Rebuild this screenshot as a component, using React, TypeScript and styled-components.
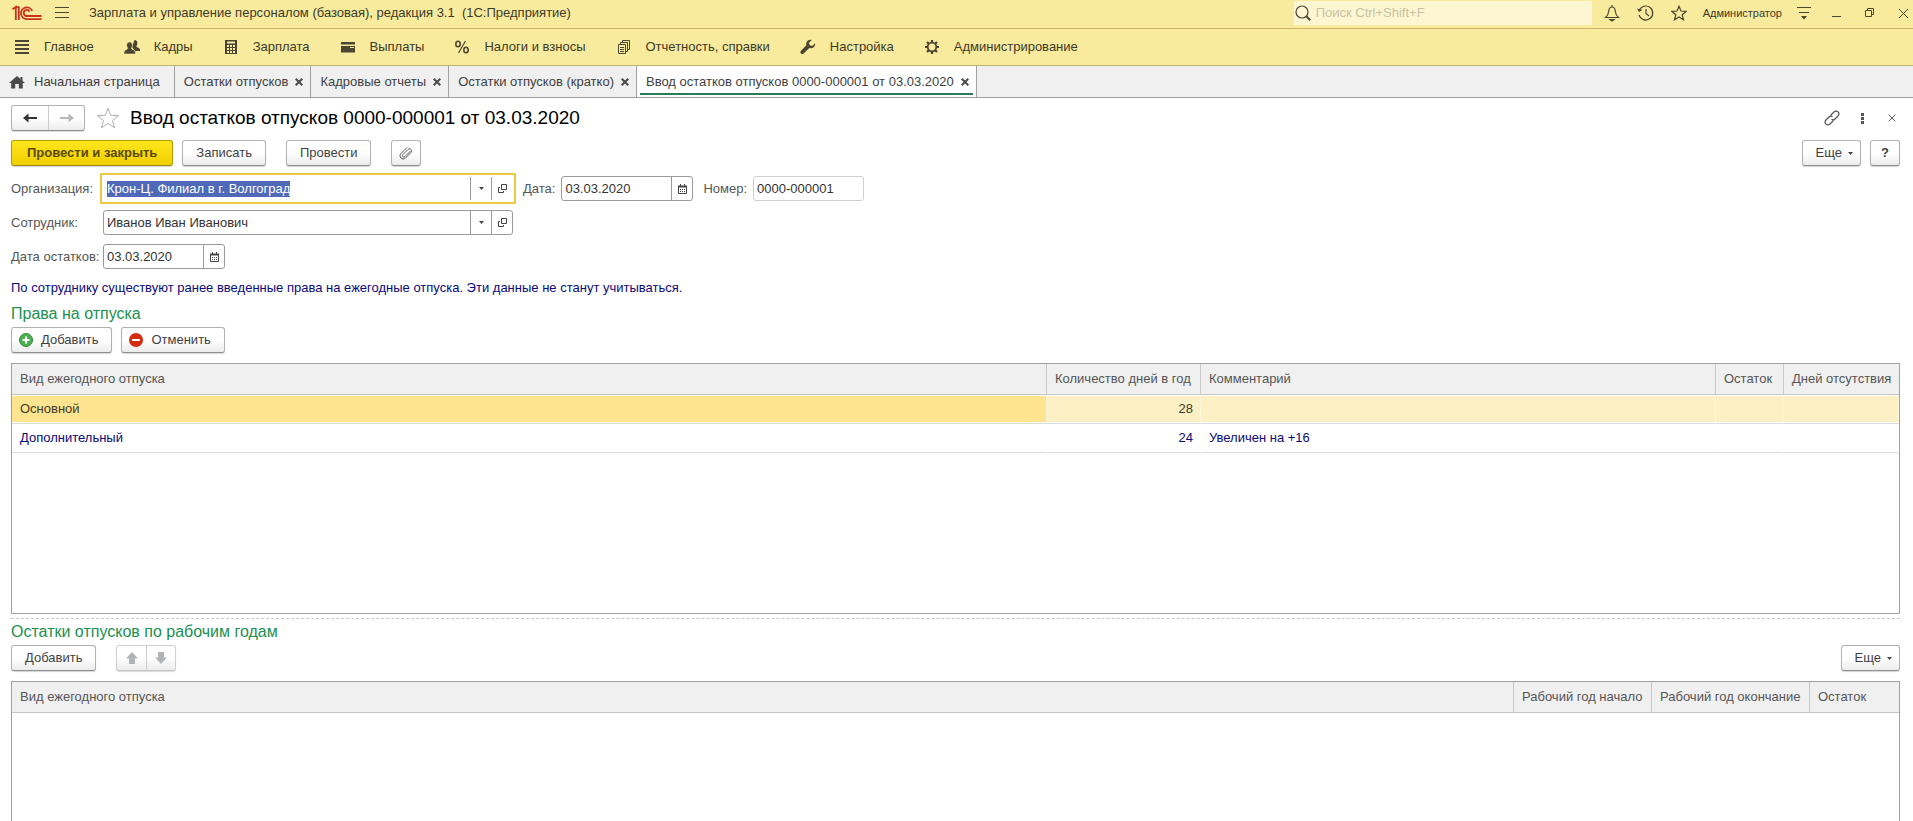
import React from "react";
import styled, { createGlobalStyle } from "styled-components";

const Global = createGlobalStyle`
  * { box-sizing: border-box; }
  body {
    margin: 0;
    background: #fff;
    color: #3f3f3f;
    font: 13px/16px "Liberation Sans", Arial, sans-serif;
  }
  button, input { font: inherit; color: inherit; }
`;

const Page = styled.div`
  display: flex;
  flex-direction: column;
  min-height: 100vh;
`;

const TitleBar = styled.header`
  display: flex;
  align-items: center;
  height: 29px;
  flex: none;
  padding: 0 0 2px 12px;
  background: #f8eb9e;
  border-bottom: 1px solid #c9b468;
  color: #3d3a28;
`;

const AppTitle = styled.div`
  margin-left: 7px;
  flex: 1;
  white-space: pre;
`;

const IconButton = styled.button<{ $w?: number }>`
  display: flex;
  align-items: center;
  justify-content: center;
  width: ${(p) => p.$w ?? 34}px;
  height: 24px;
  flex: none;
  padding: 0;
  border: 0;
  background: none;
`;

const Search = styled.label`
  display: flex;
  align-items: center;
  width: 298px;
  height: 24px;
  margin-right: 3px;
  background: #fdf6d3;
  input {
    flex: 1;
    min-width: 0;
    border: 0;
    padding: 0 4px;
    background: none;
    outline: 0;
  }
  input::placeholder { color: #c9c3a2; opacity: 1; }
`;

const UserLink = styled.a`
  margin: 0 12px 0 8px;
  font-size: 11px;
  color: #3d3a28;
  text-decoration: none;
`;

const Menu = styled.nav`
  display: flex;
  align-items: center;
  gap: 30px;
  height: 37px;
  flex: none;
  padding: 0 14px;
  background: #f8eb9e;
  border-bottom: 1px solid #bfb27a;
`;

const MenuItem = styled.a`
  display: flex;
  align-items: center;
  gap: 14px;
  color: #3d3a28;
  text-decoration: none;
  white-space: nowrap;
`;

const Tabs = styled.nav`
  display: flex;
  height: 32px;
  flex: none;
  background: #f0f0f0;
  border-bottom: 1px solid #a0a0a0;
`;

const Tab = styled.div<{ $active?: boolean }>`
  position: relative;
  display: flex;
  align-items: center;
  gap: 7px;
  padding: 0 7px 0 9px;
  border-right: 1px solid #a0a0a0;
  background: ${(p) => (p.$active ? "#fff" : "none")};
  white-space: nowrap;
  a { display: flex; gap: 9px; align-items: center; color: #3f3f3f; text-decoration: none; }
  &::after {
    content: "";
    display: ${(p) => (p.$active ? "block" : "none")};
    position: absolute;
    left: 3px;
    right: 3px;
    bottom: 2px;
    height: 2px;
    background: #2b7d58;
  }
`;

const HomeTab = styled(Tab)`
  padding-right: 14px;
`;

const Form = styled.main`
  display: flex;
  flex-direction: column;
  flex: 1;
  padding: 7px 13px 0 11px;
`;

const Row = styled.div<{ $gap?: number }>`
  display: flex;
  align-items: center;
  gap: ${(p) => p.$gap ?? 0}px;
  flex: none;
`;

const Heading = styled.h1`
  flex: 1;
  margin: 0;
  font-size: 19px;
  line-height: 24px;
  font-weight: 400;
  color: #000;
`;

const Button = styled.button<{ $pad?: number; $primary?: boolean }>`
  display: flex;
  align-items: center;
  justify-content: center;
  gap: 8px;
  height: 26px;
  padding: 0 ${(p) => p.$pad ?? 13}px;
  border: 1px solid ${(p) => (p.$primary ? "#b39b0c" : "#b2b2b2")};
  border-bottom-color: ${(p) => (p.$primary ? "#9c8608" : "#8f8f8f")};
  border-radius: 3px;
  background: ${(p) =>
    p.$primary
      ? "linear-gradient(#ffe61c, #f0cf00)"
      : "linear-gradient(#fff 50%, #ececec)"};
  box-shadow: 0 1px 1px #d5d5d5;
  color: ${(p) => (p.$primary ? "#5a4a00" : "#3f3f3f")};
  font-weight: ${(p) => (p.$primary ? 700 : 400)};
  white-space: nowrap;
`;

const PictureButton = styled(Button)`
  padding: 0 13px 0 7px;
`;

const MoreButton = styled(Button)`
  gap: 6px;
  padding: 0 7px 0 13px;
`;

const Pair = styled.div<{ $faded?: boolean }>`
  display: flex;
  height: 26px;
  border: 1px solid ${(p) => (p.$faded ? "#d0d0d0" : "#b2b2b2")};
  border-bottom-color: ${(p) => (p.$faded ? "#c4c4c4" : "#8f8f8f")};
  border-radius: 3px;
  background: linear-gradient(#fff 50%, #ececec);
  box-shadow: 0 1px 1px #dadada;
`;

const PairButton = styled.button<{ $w: number }>`
  display: flex;
  align-items: center;
  justify-content: center;
  width: ${(p) => p.$w}px;
  padding: 0;
  border: 0;
  background: none;
  & + & { border-left: 1px solid #ccc; }
`;

const Toolbar = styled(Row)`
  margin-top: 9px;
`;

const TableToolbar = styled(Row)`
  margin-top: 4px;
`;

const Spacer = styled.div`
  flex: 1;
`;

const Fields = styled.div`
  display: grid;
  grid-template-columns: 92px auto;
  row-gap: 9px;
  align-items: center;
  margin-top: 10px;
`;

const Label = styled.label`
  color: #555;
  white-space: nowrap;
`;

const InlineLabel = styled(Label)`
  margin-left: 4px;
`;

const Field = styled.div<{ $w: number; $focus?: boolean; $faded?: boolean }>`
  display: flex;
  width: ${(p) => p.$w}px;
  height: 25px;
  flex: none;
  border: 1px solid ${(p) => (p.$focus ? "#fff" : p.$faded ? "#d0d0d0" : "#9a9a9a")};
  border-radius: ${(p) => (p.$focus ? 0 : 3)}px;
  outline: ${(p) => (p.$focus ? "2px solid #ebca42" : "none")};
  outline-offset: 1px;
  background: #fff;
  color: #333;
  input {
    flex: 1;
    min-width: 0;
    padding: 0 0 0 3px;
    border: 0;
    background: none;
    outline: 0;
  }
  input::selection { background: #4f69b8; color: #fff; }
`;

const FieldButton = styled.button`
  display: flex;
  align-items: center;
  justify-content: center;
  width: 21px;
  padding: 0;
  border: 0;
  border-left: 1px solid #9a9a9a;
  background: none;
`;

const Notice = styled.p`
  margin: 11px 0 0;
  color: #0a0a78;
`;

const Section = styled.h2<{ $top: number }>`
  margin: ${(p) => p.$top}px 0 0;
  font-size: 16px;
  line-height: 18px;
  font-weight: 400;
  color: #209050;
`;

const GridBox = styled.div<{ $h?: number }>`
  margin-top: 10px;
  border: 1px solid #a0a0a0;
  background: #fff;
  ${(p) => (p.$h ? `height: ${p.$h}px; flex: none;` : "flex: 1; border-bottom: 0;")}
`;

const Table = styled.table`
  width: 100%;
  table-layout: fixed;
  border-collapse: separate;
  border-spacing: 0;
  th, td { padding: 0 7px 0 8px; text-align: left; font-weight: 400; white-space: nowrap; }
  th {
    height: 31px;
    background: #f0f0f0;
    color: #555;
    border-bottom: 1px solid #c4c4c4;
    border-right: 1px solid #c8c8c8;
  }
  th:last-child { border-right: 0; }
  td { height: 29px; border-bottom: 1px solid #dcdcdc; }
`;

const BodyRow = styled.tr<{ $selected?: boolean }>`
  color: ${(p) => (p.$selected ? "#3f3a28" : "#0a0a78")};
  td {
    background: ${(p) => (p.$selected ? "#fcf0c4" : "#fff")};
    border-right: 1px solid ${(p) => (p.$selected ? "#fdf7de" : "#fff")};
    box-shadow: ${(p) => (p.$selected ? "inset 0 1px #fff, inset 0 -1px #fff" : "none")};
  }
  td:first-child { background: ${(p) => (p.$selected ? "#fee48f" : "#fff")}; }
  td:nth-child(2) { text-align: right; }
`;

const Divider = styled.hr`
  width: 100%;
  margin: 4px 0 0;
  border: 0;
  border-top: 1px dashed #c8c8c8;
`;

const INK = "#4a4632";

const Logo = () => (
  <svg width="30" height="18" viewBox="0 0 30 18" fill="none" stroke="#c8321e" strokeWidth="1.8">
    <path d="M.5 5.200 3.800 3V16M4 3.200H6.800V16" />
    <path d="M20.300 7A5.900 5.900 0 1 0 14.700 15.200H29.500" />
    <path d="M17.500 7.800A3 3 0 1 0 14.700 12H29.500" />
  </svg>
);

const Cross = ({ s = 8, w = 2, c = "#4a4a4a" }: { s?: number; w?: number; c?: string }) => (
  <svg width={s} height={s} viewBox="0 0 8 8" stroke={c} strokeWidth={(w * 8) / s}>
    <path d="M.7.7 7.300 7.300M7.300.7.7 7.300" />
  </svg>
);

const Caret = () => (
  <svg width="5" height="3" viewBox="0 0 5 3" fill="#444"><path d="M0 0h5L2.500 3z" /></svg>
);

const OpenIcon = () => (
  <svg width="9" height="9" viewBox="0 0 9 9" fill="none" stroke="#444">
    <path d="M3.500.5h5v5h-5zM2 3.500H.5v5h5V7" />
  </svg>
);

const CalendarIcon = () => (
  <svg width="9" height="10" viewBox="0 0 9 10" fill="none" stroke="#444">
    <path d="M.5 2.500h8v7h-8zM2.500 0v2M6.500 0v2" />
    <path d="M0 2.500h9" strokeWidth="2" />
    <path d="M2 5.500h5M2 7.500h5" strokeDasharray="1 1" />
  </svg>
);

const Arrow = ({ left, c }: { left?: boolean; c: string }) => (
  <svg width="14" height="10" viewBox="0 0 14 10" fill={c}>
    {left ? <path d="M0 5 5.500.5V4H14v2H5.500v3.500z" /> : <path d="M14 5 8.500.5V4H0v2h8.500v3.500z" />}
  </svg>
);

const BlockArrow = ({ up }: { up?: boolean }) => (
  <svg width="12" height="12" viewBox="0 0 12 12" fill="#b0b4b6">
    {up ? <path d="M6 0 12 6.500H9V12H3V6.500H0z" /> : <path d="M6 12 0 5.500H3V0h6v5.500h3z" />}
  </svg>
);

const menuIcons: Record<string, React.ReactNode> = {
  list: <path d="M1 2h14M1 6h14M1 10h14M1 14h14" stroke={INK} strokeWidth="2" />,
  people: (
    <g fill={INK}>
      <path d="M10.500 1c2 0 3 1.400 2.800 3.500-.1 1.500-.8 2.300-1 3 .1.900 3.700 1.200 3.700 3.500v1h-5L8 8z" />
      <path d="M5.500 3c2 0 3.100 1.500 2.900 3.600-.1 1.500-.9 2.200-1 2.900.1 1 4.100 1.300 4.100 4V15H0v-1.500c0-2.700 3.600-3 3.700-4-.1-.7-.9-1.400-1-2.900C2.500 4.500 3.600 3 5.500 3z" stroke="#f8eb9e" strokeWidth=".6" />
    </g>
  ),
  calc: (
    <g>
      <path d="M2 1h12v14H2z" fill={INK} />
      <path d="M4 3.500h8M4 7h2M7 7h2M10 7h2M4 10h2M7 10h2M10 10h2M4 13h2M7 13h2M10 13h2" stroke="#f8eb9e" strokeWidth="2" />
    </g>
  ),
  card: (
    <g fill={INK}>
      <path d="M1 3h14v2.500H1zM1 7h14v6.500H1z" />
      <path d="M10 8.500h4" stroke="#f8eb9e" strokeWidth="1" />
    </g>
  ),
  percent: (
    <g fill="none" stroke={INK} strokeWidth="1.600">
      <ellipse cx="4" cy="5" rx="2.200" ry="2.800" />
      <ellipse cx="12" cy="11" rx="2.200" ry="2.800" />
      <path d="M11.500 2 4.500 14" strokeWidth="1.200" />
    </g>
  ),
  docs: (
    <g fill="none" stroke={INK}>
      <path d="M2.500 5.500h7v9h-7zM4.500 5V3.500h7v9H10M6.500 3V1.500h7v9H12M4 8.500h4M4 10.500h4M4 12.500h4" />
    </g>
  ),
  wrench: (
    <path d="M15 4.300 12.300 7 9.700 6.300 9 3.700 11.700 1C9.500.4 7 1.500 6.300 4c-.2.800-.1 1.500.1 2.300L1 11.800c-.8.800-.8 2 0 2.700s1.900.8 2.700 0L9.200 9c2.500.9 5.300-.5 5.900-3 .1-.6.100-1.200-.1-1.700z" fill={INK} />
  ),
  gear: (
    <g fill="none" stroke={INK}>
      <circle cx="8" cy="8" r="4.300" strokeWidth="1.800" />
      <path d="M8 1v2.500M8 12.500V15M1 8h2.500M12.500 8H15M3 3l1.900 1.900M11.100 11.100 13 13M3 13l1.900-1.900M11.100 4.900 13 3" strokeWidth="2.200" />
    </g>
  ),
};

const menu: [string, string][] = [
  ["list", "Главное"],
  ["people", "Кадры"],
  ["calc", "Зарплата"],
  ["card", "Выплаты"],
  ["percent", "Налоги и взносы"],
  ["docs", "Отчетность, справки"],
  ["wrench", "Настройка"],
  ["gear", "Администрирование"],
];

const tabs = [
  "Остатки отпусков",
  "Кадровые отчеты",
  "Остатки отпусков (кратко)",
  "Ввод остатков отпусков 0000-000001 от 03.03.2020",
];

const leaveTypes = [
  { name: "Основной", days: 28, comment: "" },
  { name: "Дополнительный", days: 24, comment: "Увеличен на +16" },
];

export default function App() {
  const orgRef = React.useRef<HTMLInputElement>(null);
  React.useEffect(() => {
    orgRef.current?.focus();
    orgRef.current?.select();
  }, []);

  return (
    <Page>
      <Global />
      <TitleBar>
        <Logo />
        <IconButton $w={40} aria-label="Меню">
          <svg width="14" height="12" viewBox="0 0 14 12" stroke={INK}><path d="M0 .5h14M0 5.500h14M0 10.500h14" /></svg>
        </IconButton>
        <AppTitle>{"Зарплата и управление персоналом (базовая), редакция 3.1  (1С:Предприятие)"}</AppTitle>
        <Search>
          <svg width="18" height="18" viewBox="0 0 18 18" fill="none" stroke={INK} strokeWidth="1.200">
            <circle cx="8" cy="8" r="6" /><path d="m12.300 12.300 4 4" strokeWidth="2" />
          </svg>
          <input aria-label="Поиск" placeholder="Поиск Ctrl+Shift+F" />
        </Search>
        <IconButton aria-label="Уведомления">
          <svg width="16" height="18" viewBox="0 0 16 18" fill="none" stroke={INK} strokeWidth="1.200">
            <path d="M1.500 13.500c2.500-2 3-4 3.300-6.500C5 4.500 6.300 3 8 3s3 1.500 3.200 4c.3 2.500.8 4.500 3.300 6.500zM8 1v2" />
            <path d="M6 15.500h4L8 17z" fill={INK} />
          </svg>
        </IconButton>
        <IconButton aria-label="История">
          <svg width="17" height="18" viewBox="0 0 17 18" fill="none" stroke={INK} strokeWidth="1.200">
            <path d="M2.200 6.500A7 7 0 1 1 2 11M9 5v4.500l3 2.500" /><path d="M0 4.500 2 8l3.500-2z" fill={INK} stroke="none" />
          </svg>
        </IconButton>
        <IconButton $w={32} aria-label="Избранное">
          <svg width="16" height="16" viewBox="0 0 16 16" fill="none" stroke={INK} strokeWidth="1.200">
            <path d="m8 1.200 2 4.800 5.200.3-4 3.400 1.300 5.100L8 12l-4.500 2.800 1.300-5.100-4-3.400L6 6z" />
          </svg>
        </IconButton>
        <UserLink href="#">Администратор</UserLink>
        <Row $gap={13}>
          <IconButton $w={20} aria-label="Настройки окна">
            <svg width="14" height="13" viewBox="0 0 14 13" fill={INK}><path d="M0 0h14v1H0zM2 5h10v1H2zM4 9h6l-3 3.500z" /></svg>
          </IconButton>
          <IconButton $w={20} aria-label="Свернуть">
            <svg width="10" height="10" viewBox="0 0 10 10" fill={INK}><path d="M0 8h9v1H0z" /></svg>
          </IconButton>
          <IconButton $w={20} aria-label="Развернуть">
            <svg width="10" height="10" viewBox="0 0 10 10" fill="none" stroke={INK}><path d="M.5 2.500h6v6h-6zM2.500 2V.5h6v6H7" /></svg>
          </IconButton>
          <IconButton $w={20} aria-label="Закрыть"><Cross s={11} w={1} c={INK} /></IconButton>
        </Row>
      </TitleBar>

      <Menu>
        {menu.map(([icon, text]) => (
          <MenuItem href="#" key={text}>
            <svg width="16" height="16" viewBox="0 0 16 16">{menuIcons[icon]}</svg>
            {text}
          </MenuItem>
        ))}
      </Menu>

      <Tabs>
        <HomeTab>
          <a href="#">
            <svg width="16" height="14" viewBox="0 0 16 14" fill="#4a4a4a"><path d="M8 1 0 8h2.200v5.500h4V9h3.600v4.500h4V8H16l-2.500-2.200V2h-2v2z" /></svg>
            Начальная страница
          </a>
        </HomeTab>
        {tabs.map((t, i) => (
          <Tab key={t} $active={i === 3}>
            <a href="#">{t}</a>
            <IconButton $w={8} aria-label="Закрыть вкладку"><Cross /></IconButton>
          </Tab>
        ))}
      </Tabs>

      <Form>
        <Row>
          <Pair>
            <PairButton $w={36} aria-label="Назад"><Arrow left c="#333" /></PairButton>
            <PairButton $w={36} aria-label="Вперед"><Arrow c="#b8b8b8" /></PairButton>
          </Pair>
          <IconButton $w={45} aria-label="В избранное">
            <svg width="24" height="22" viewBox="0 0 24 22" fill="none" stroke="#b0b0b0">
              <path d="m12 1.200 2.700 7.100 8 .3-6.300 4.800 2.200 7.400L12 16.500l-6.600 4.300 2.200-7.400-6.300-4.800 8-.3z" />
            </svg>
          </IconButton>
          <Heading>Ввод остатков отпусков 0000-000001 от 03.03.2020</Heading>
          <Row $gap={14}>
            <IconButton $w={16} aria-label="Ссылка">
              <svg width="16" height="16" viewBox="0 0 16 16" fill="none" stroke="#555" strokeWidth="1.200">
                <path d="M6.500 5.500 10 2c3-2.500 6.500 1 4 4l-3 3c-1 1-2.500 1-3.500.3M9.500 10.500 6 14c-3 2.500-6.500-1-4-4l3-3c1-1 2.500-1 3.500-.3" />
              </svg>
            </IconButton>
            <IconButton $w={16} aria-label="Действия">
              <svg width="3" height="11" viewBox="0 0 3 11" fill="#555"><path d="M0 0h3v3H0zM0 4h3v3H0zM0 8h3v3H0z" /></svg>
            </IconButton>
            <IconButton $w={16} aria-label="Закрыть форму"><Cross s={8} w={1} c="#555" /></IconButton>
          </Row>
        </Row>

        <Toolbar $gap={20}>
          <Row $gap={9}>
            <Button $primary $pad={15}>Провести и закрыть</Button>
            <Button>Записать</Button>
          </Row>
          <Button>Провести</Button>
          <Button $pad={7} aria-label="Вложения">
            <svg width="14" height="14" viewBox="0 0 14 14" fill="none" stroke="#555">
              <path d="M11.500 5 6 10.500c-1.500 1.500-3.500-.5-2-2L9 3.500c2-2 5 1 3 3L6.500 12c-3 3-7.500-1.500-4.500-4.500L8 1.500" />
            </svg>
          </Button>
          <Spacer />
          <Row $gap={9}>
            <MoreButton>Еще <Caret /></MoreButton>
            <Button $pad={10} aria-label="Справка"><b>?</b></Button>
          </Row>
        </Toolbar>

        <Fields>
          <Label htmlFor="org">Организация:</Label>
          <Row $gap={6}>
            <Field $w={410} $focus>
              <input id="org" ref={orgRef} defaultValue="Крон-Ц. Филиал в г. Волгоград" />
              <FieldButton aria-label="Выбрать"><Caret /></FieldButton>
              <FieldButton aria-label="Открыть"><OpenIcon /></FieldButton>
            </Field>
            <InlineLabel htmlFor="date">Дата:</InlineLabel>
            <Field $w={132}>
              <input id="date" defaultValue="03.03.2020" />
              <FieldButton aria-label="Календарь"><CalendarIcon /></FieldButton>
            </Field>
            <InlineLabel htmlFor="num">Номер:</InlineLabel>
            <Field $w={111} $faded><input id="num" defaultValue="0000-000001" /></Field>
          </Row>
          <Label htmlFor="emp">Сотрудник:</Label>
          <Field $w={410}>
            <input id="emp" defaultValue="Иванов Иван Иванович" />
            <FieldButton aria-label="Выбрать"><Caret /></FieldButton>
            <FieldButton aria-label="Открыть"><OpenIcon /></FieldButton>
          </Field>
          <Label htmlFor="rest">Дата остатков:</Label>
          <Field $w={122}>
            <input id="rest" defaultValue="03.03.2020" />
            <FieldButton aria-label="Календарь"><CalendarIcon /></FieldButton>
          </Field>
        </Fields>

        <Notice>По сотруднику существуют ранее введенные права на ежегодные отпуска. Эти данные не станут учитываться.</Notice>

        <Section $top={9}>Права на отпуска</Section>
        <TableToolbar $gap={9}>
          <PictureButton>
            <svg width="14" height="14" viewBox="0 0 14 14"><circle cx="7" cy="7" r="6.500" fill="#4cb050" stroke="#2f8a3a" /><path d="M7 3.500v7M3.500 7h7" stroke="#fff" strokeWidth="2" /></svg>
            Добавить
          </PictureButton>
          <PictureButton>
            <svg width="14" height="14" viewBox="0 0 14 14"><circle cx="7" cy="7" r="7" fill="#d42c10" /><path d="M3 7h8" stroke="#fff" strokeWidth="2" /></svg>
            Отменить
          </PictureButton>
        </TableToolbar>
        <GridBox $h={251}>
          <Table>
            <colgroup><col /><col width="154" /><col width="515" /><col width="68" /><col width="115" /></colgroup>
            <thead>
              <tr><th>Вид ежегодного отпуска</th><th>Количество дней в год</th><th>Комментарий</th><th>Остаток</th><th>Дней отсутствия</th></tr>
            </thead>
            <tbody>
              {leaveTypes.map((r, i) => (
                <BodyRow key={r.name} $selected={i === 0}>
                  <td>{r.name}</td><td>{r.days}</td><td>{r.comment}</td><td /><td />
                </BodyRow>
              ))}
            </tbody>
          </Table>
        </GridBox>
        <Divider />

        <Section $top={4}>Остатки отпусков по рабочим годам</Section>
        <TableToolbar $gap={20}>
          <Button>Добавить</Button>
          <Pair $faded>
            <PairButton $w={29} aria-label="Вверх"><BlockArrow up /></PairButton>
            <PairButton $w={29} aria-label="Вниз"><BlockArrow /></PairButton>
          </Pair>
          <Spacer />
          <MoreButton>Еще <Caret /></MoreButton>
        </TableToolbar>
        <GridBox>
          <Table>
            <colgroup><col /><col width="138" /><col width="158" /><col width="89" /></colgroup>
            <thead>
              <tr><th>Вид ежегодного отпуска</th><th>Рабочий год начало</th><th>Рабочий год окончание</th><th>Остаток</th></tr>
            </thead>
          </Table>
        </GridBox>
      </Form>
    </Page>
  );
}
